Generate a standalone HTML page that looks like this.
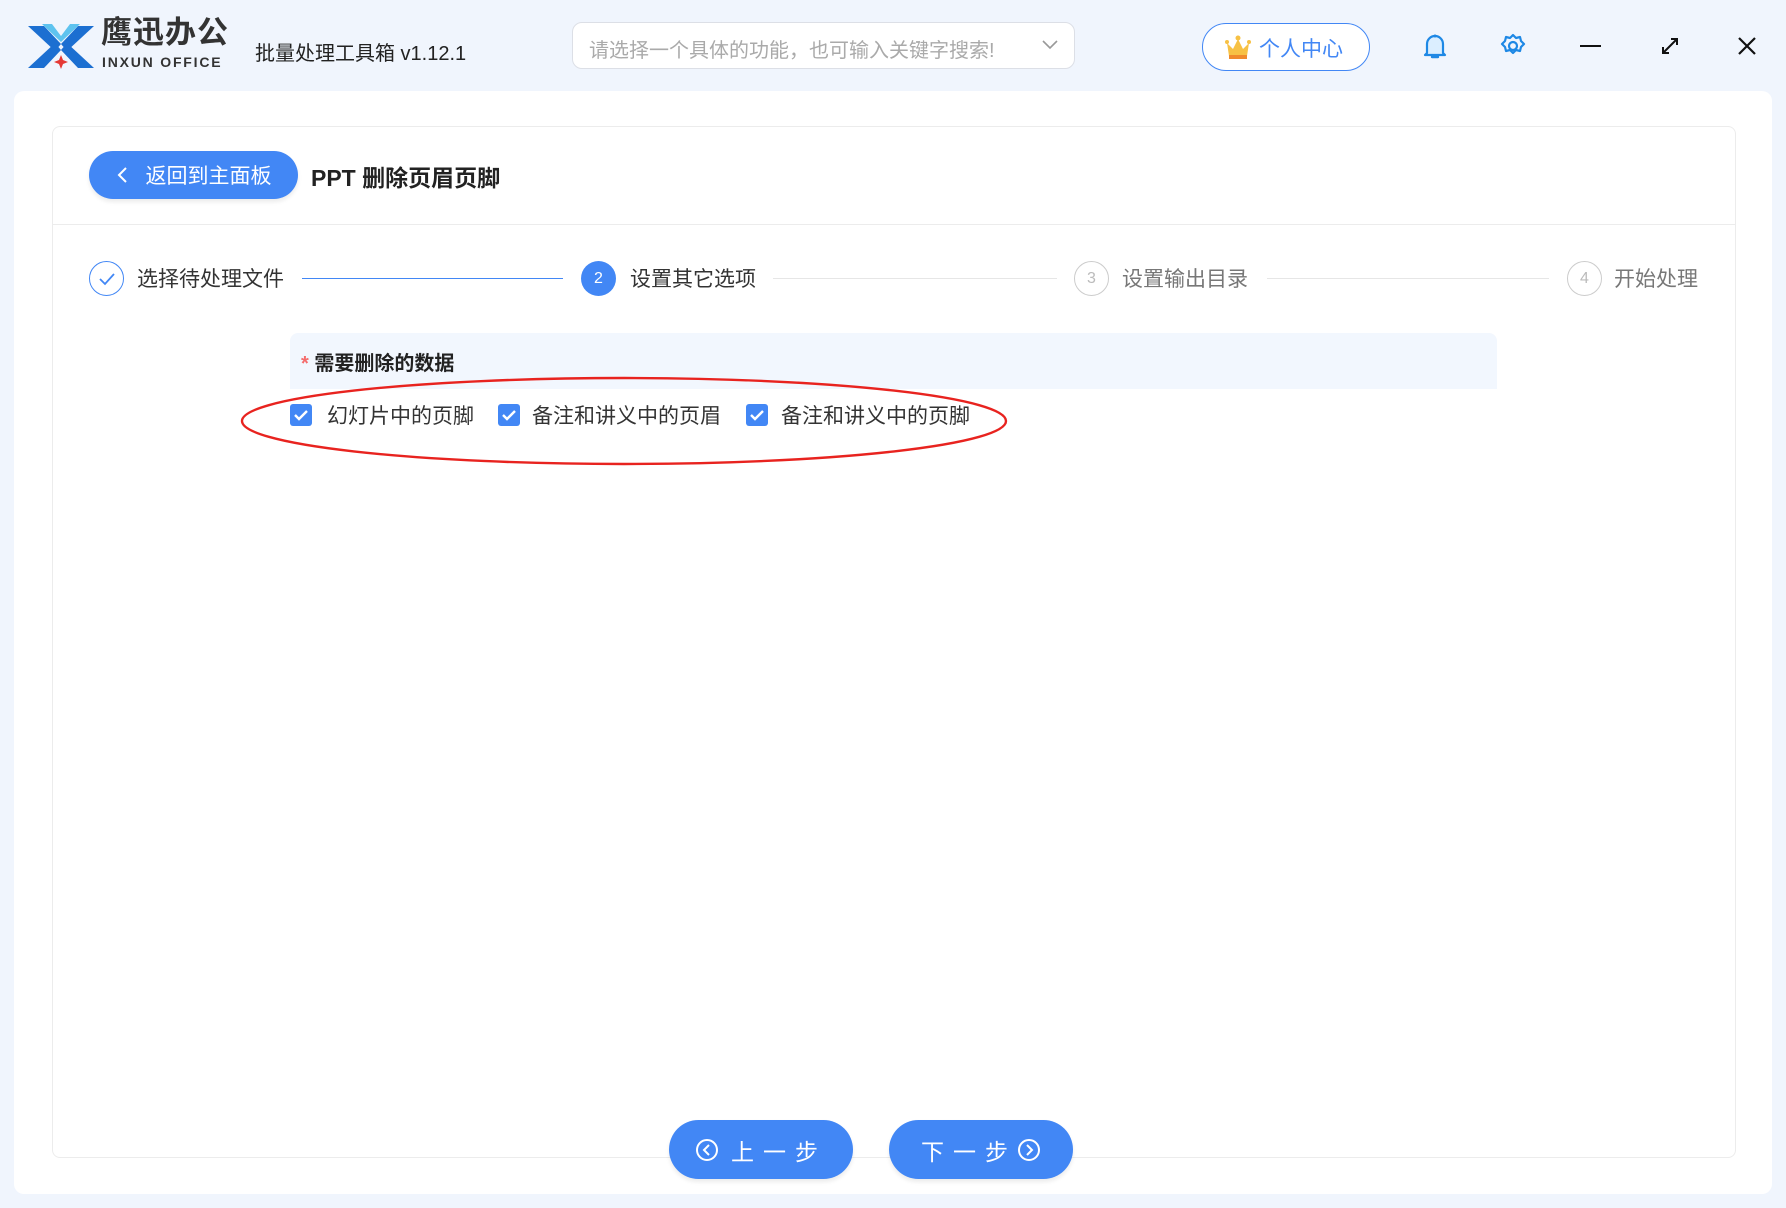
<!DOCTYPE html>
<html><head><meta charset="utf-8"><style>
*{margin:0;padding:0;box-sizing:border-box}
body{width:1786px;height:1208px;background:#f0f5fd;font-family:"Liberation Sans","Noto Sans CJK SC",sans-serif;position:relative;overflow:hidden;color:#333}
.a{position:absolute}
.main{left:14px;top:91px;width:1758px;height:1103px;background:#fff;border-radius:10px}
.card{left:52px;top:126px;width:1684px;height:1032px;border:1px solid #ececec;border-radius:8px;background:#fff}
.btn{background:#4287f5;color:#fff;border-radius:30px;display:flex;align-items:center;justify-content:center;box-shadow:0 3px 4px rgba(0,0,0,.08)}
.circ{width:35px;height:35px;border-radius:50%;display:flex;align-items:center;justify-content:center;font-size:16px}
.step{font-size:21px;top:263px}
.cb{width:22px;height:22px;background:#4287f5;border-radius:3px;top:404px}
.cbt{font-size:21px;top:400px;color:#333}
</style></head><body>
<svg class="a" style="left:28px;top:22px" width="66" height="48" viewBox="0 0 66 48">
<path d="M0 4h16l17 18-6 7z" fill="#1c6fd1"/><path d="M66 4H50L33 22l6 7z" fill="#1c6fd1"/>
<path d="M14 2h10l9 12 9-12h10L33 20z" fill="#5ec3ef"/>
<path d="M0 46h16l17-18-6-7z" fill="#1c6fd1"/><path d="M66 46H50L33 28l6-7z" fill="#1c6fd1"/>
<path d="M33 33l2 5 5 2-5 2-2 5-2-5-5-2 5-2z" fill="#e53935"/>
</svg>
<div class="a" style="left:101px;top:15px;font-size:31px;line-height:36px;font-weight:bold;color:#333;letter-spacing:1px">鹰迅办公</div>
<div class="a" style="left:102px;top:54px;font-size:14px;line-height:16px;font-weight:bold;color:#333;letter-spacing:1.8px">INXUN OFFICE</div>
<div class="a" style="left:255px;top:37px;font-size:20px;color:#222">批量处理工具箱 v1.12.1</div>
<div class="a" style="left:572px;top:22px;width:503px;height:47px;border:1px solid #dcdfe6;border-radius:10px;background:#fff"></div>
<div class="a" style="left:589px;top:34px;font-size:20px;color:#aaa">请选择一个具体的功能，也可输入关键字搜索!</div>
<svg class="a" style="left:1042px;top:40px" width="16" height="10"><path d="M1 1l7 7 7-7" stroke="#999" stroke-width="1.6" fill="none"/></svg>
<div class="a" style="left:1202px;top:23px;width:168px;height:48px;border:1.5px solid #4287f5;border-radius:24px;background:#fff"></div>
<svg class="a" style="left:1225px;top:35px" width="26" height="26" viewBox="0 0 26 26"><path d="M2 8l6 6 5-10 5 10 6-6-2 13H4z" fill="#f7c144"/><rect x="4" y="20" width="18" height="4" fill="#f08a2c"/><circle cx="13" cy="3" r="2.5" fill="#f7c144"/><circle cx="2" cy="7" r="2" fill="#f7c144"/><circle cx="24" cy="7" r="2" fill="#f7c144"/></svg>
<div class="a" style="left:1259px;top:33px;font-size:21px;color:#4287f5">个人中心</div>
<svg class="a" style="left:1423px;top:32px" width="24" height="28" viewBox="0 0 24 28"><path d="M4 21V12a8 8 0 0116 0v9l2 2H2z" fill="#dbeeff" stroke="#1e88e5" stroke-width="2.2" stroke-linejoin="round"/><path d="M9 25h6" stroke="#1e88e5" stroke-width="2.4" stroke-linecap="round"/><circle cx="12" cy="4" r="1.5" fill="#1e88e5"/></svg>
<svg class="a" style="left:1500px;top:33px" width="26" height="26" viewBox="0 0 26 26"><path d="M13 2l3 3 4-1 1 4 3 3-3 3-1 4-4-1-3 3-3-3-4 1-1-4-3-3 3-3 1-4 4 1z" fill="none" stroke="#1e88e5" stroke-width="2.2" stroke-linejoin="round"/><circle cx="13" cy="13" r="4" fill="none" stroke="#1e88e5" stroke-width="2.2"/></svg>
<div class="a" style="left:1580px;top:45px;width:21px;height:2px;background:#111"></div>
<svg class="a" style="left:1659px;top:35px" width="22" height="22"><path d="M4 18L18 4M12 4h6v6M4 12v6h6" stroke="#111" stroke-width="2" fill="none"/></svg>
<svg class="a" style="left:1737px;top:36px" width="20" height="20"><path d="M2 2l16 16M18 2L2 18" stroke="#111" stroke-width="2.2"/></svg>

<div class="a main"></div>
<div class="a card"></div>
<div class="a btn" style="left:89px;top:151px;width:209px;height:48px;font-size:21px"><svg width="14" height="18" style="margin-right:16px"><path d="M10 2L3 9l7 7" stroke="#fff" stroke-width="2" fill="none"/></svg>返回到主面板</div>
<div class="a" style="left:311px;top:159px;font-size:23px;font-weight:bold;color:#222">PPT 删除页眉页脚</div>
<div class="a" style="left:53px;top:224px;width:1682px;height:1px;background:#ececec"></div>

<div class="a circ" style="left:89px;top:261px;border:1.5px solid #4287f5"><svg width="18" height="14"><path d="M2 7l5 5 9-10" stroke="#4287f5" stroke-width="1.8" fill="none"/></svg></div>
<div class="a step" style="left:137px">选择待处理文件</div>
<div class="a" style="left:302px;top:278px;width:261px;height:1px;background:#4287f5"></div>
<div class="a circ" style="left:581px;top:261px;background:#4287f5;color:#fff">2</div>
<div class="a step" style="left:630px">设置其它选项</div>
<div class="a" style="left:773px;top:278px;width:284px;height:1px;background:#e6e6e6"></div>
<div class="a circ" style="left:1074px;top:261px;border:1.5px solid #ccc;color:#bbb">3</div>
<div class="a step" style="left:1122px;color:#777">设置输出目录</div>
<div class="a" style="left:1267px;top:278px;width:282px;height:1px;background:#e6e6e6"></div>
<div class="a circ" style="left:1567px;top:261px;border:1.5px solid #ccc;color:#bbb">4</div>
<div class="a step" style="left:1614px;color:#777">开始处理</div>

<div class="a" style="left:290px;top:333px;width:1207px;height:56px;background:#f2f7fe;border-radius:8px 8px 0 0"></div>
<div class="a" style="left:301px;top:347px;font-size:20px;font-weight:bold;color:#222"><span style="color:#f56c6c">*</span> 需要删除的数据</div>

<div class="a cb" style="left:290px"><svg width="22" height="22"><path d="M5 11l4 4 8-8" stroke="#fff" stroke-width="2.4" fill="none"/></svg></div>
<div class="a cbt" style="left:327px">幻灯片中的页脚</div>
<div class="a cb" style="left:498px"><svg width="22" height="22"><path d="M5 11l4 4 8-8" stroke="#fff" stroke-width="2.4" fill="none"/></svg></div>
<div class="a cbt" style="left:532px">备注和讲义中的页眉</div>
<div class="a cb" style="left:746px"><svg width="22" height="22"><path d="M5 11l4 4 8-8" stroke="#fff" stroke-width="2.4" fill="none"/></svg></div>
<div class="a cbt" style="left:781px">备注和讲义中的页脚</div>
<svg class="a" style="left:236px;top:373px" width="776" height="97"><ellipse cx="388" cy="48" rx="382" ry="43" fill="none" stroke="#e8231f" stroke-width="2.4"/></svg>

<div class="a btn" style="left:669px;top:1120px;width:184px;height:59px;font-size:23px;letter-spacing:9px"><svg width="24" height="24" style="margin-right:12px"><circle cx="12" cy="12" r="10" stroke="#fff" stroke-width="2" fill="none"/><path d="M14 7l-5 5 5 5" stroke="#fff" stroke-width="2" fill="none"/></svg>上一步</div>
<div class="a btn" style="left:889px;top:1120px;width:184px;height:59px;font-size:23px;letter-spacing:9px">下一步<svg width="24" height="24"><circle cx="12" cy="12" r="10" stroke="#fff" stroke-width="2" fill="none"/><path d="M10 7l5 5-5 5" stroke="#fff" stroke-width="2" fill="none"/></svg></div>
</body></html>
